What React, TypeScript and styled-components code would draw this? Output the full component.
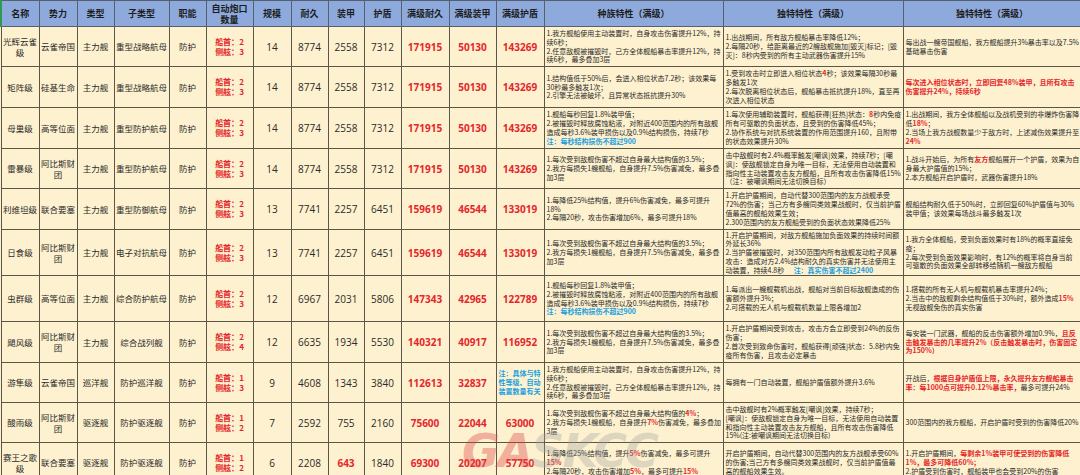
import React from 'react';
import styled, { createGlobalStyle } from 'styled-components';

type Tone = 'red' | 'blue';
type Seg = string | { t: string; tone: Tone };
type Para = Seg[];

const r = (t: string): Seg => ({ t, tone: 'red' });
const note = (t: string): Seg => ({ t, tone: 'blue' });

interface Ship {
  name: string;
  faction: string;
  type: string;
  sub: string;
  bow: number;
  side: number;
  scale: number;
  hp: number;
  armor: number;
  shield: number;
  maxHp: number;
  maxArmor: number;
  maxShield: number | null;
  race: Para[];
  unique: Para[];
  extra: Para[];
  h: number;
  armorRed?: boolean;
}

const COLS = [38, 38, 37, 55, 37, 47, 38, 37, 36, 37, 48, 47, 48, 179, 180, 178];
const HEADERS = [
  '名称', '势力', '类型', '子类型', '职能', '自动炮口数量', '规模', '耐久', '装甲', '护盾',
  '满级耐久', '满级装甲', '满级护盾', '种族特性（满级）', '独特特性（满级）', '独特特性（满级）',
];

const RACE_SKY: Para[] = [
  ['1.我方舰船使用主动装置时，自身攻击伤害提升12%，持续6秒；'],
  ['2.任意敌舰被摧毁时，己方全体舰船暴击率提升12%，持续6秒，最多叠加3层'],
];
const RACE_ABYSS: Para[] = [
  ['1.每次受到敌舰伤害不超过自身最大结构值的3.5%；'],
  ['2.我方每损失1艘舰船，自身提升7.5%伤害减免，最多叠加3层'],
];
const RACE_HIGH: Para[] = [
  ['1.舰船每秒回复1.8%装甲值；'],
  ['2.被摧毁时释放腐蚀粘液，对附近400范围内的所有敌舰造成每秒3.6%装甲损伤以及0.9%结构损伤，持续7秒'],
  [note('注：每秒结构损伤不超过900')],
];

const SHIPS: Ship[] = [
  {
    name: '光辉云雀级', faction: '云雀帝国', type: '主力舰', sub: '重型战略航母', bow: 2, side: 3,
    scale: 14, hp: 8774, armor: 2558, shield: 7312, maxHp: 171915, maxArmor: 50130, maxShield: 143269,
    race: RACE_SKY,
    unique: [
      ['1.出战期间，所有敌方舰船暴击率降低12%；'],
      ['2.每隔20秒，给距离最近的2艘敌舰施加[毁灭]标记；[毁灭]：8秒内受到的所有主动武器伤害提升15%'],
    ],
    extra: [['每出战一艘帝国舰船，我方舰船提升3%暴击率以及7.5%基础暴击伤害']],
    h: 40,
  },
  {
    name: '矩阵级', faction: '硅基生命', type: '主力舰', sub: '重型战略航母', bow: 2, side: 3,
    scale: 14, hp: 8774, armor: 2558, shield: 7312, maxHp: 171915, maxArmor: 50130, maxShield: 143269,
    race: [
      ['1.结构值低于50%后，会进入相位状态7.2秒；该效果每30秒最多触发1次；'],
      ['2.引擎无法被破坏，且异常状态抵抗提升30%'],
    ],
    unique: [
      ['1.受到攻击时立即进入相位状态', r('4'), '秒；该效果每隔30秒最多触发1次'],
      ['2.每次脱离相位状态后，舰船暴击抵抗提升18%，直至再次进入相位状态'],
    ],
    extra: [[r('每次进入相位状态时，立即回复48%装甲，且所有攻击伤害提升24%，持续6秒')]],
    h: 41,
  },
  {
    name: '母巢级', faction: '高等位面', type: '主力舰', sub: '重型防护航母', bow: 2, side: 3,
    scale: 14, hp: 8774, armor: 2558, shield: 7312, maxHp: 171915, maxArmor: 50130, maxShield: 143269,
    race: RACE_HIGH,
    unique: [
      ['1.每次使用辅助装置时，舰船获得[狂热]状态：', r('8'), '秒内免疫所有可驱散的负面状态，且受到的伤害降低45%；'],
      ['2.协作系统与对抗系统装置的作用范围提升160，且附带的状态效果提升30%'],
    ],
    extra: [
      ['1.出战期间，我方全体舰船以及战机受到的非爆炸伤害降低', r('18%'), '；'],
      ['2.当场上我方战舰数量少于敌方时，上述减伤效果提升至', r('24%')],
    ],
    h: 41,
  },
  {
    name: '雷暴级', faction: '阿比斯财团', type: '主力舰', sub: '重型防护航母', bow: 2, side: 3,
    scale: 14, hp: 8774, armor: 2558, shield: 7312, maxHp: 171915, maxArmor: 50130, maxShield: 143269,
    race: RACE_ABYSS,
    unique: [
      ['击中敌舰时有2.4%概率触发[嘲讽]效果，持续7秒；[嘲讽]：使敌舰锁定自身为唯一目标，无法使用自动装置和指向性主动装置攻击友方舰船，且所有攻击伤害降低15%'],
      ['（注：被嘲讽期间无法切换目标）'],
    ],
    extra: [
      ['1.战斗开始后，为所有', r('友方'), '舰船展开一个护盾，效果为自身最大护盾值的15%；'],
      ['2.本方舰船开启护盾时，武器伤害提升18%'],
    ],
    h: 40,
  },
  {
    name: '利维坦级', faction: '联合要塞', type: '主力舰', sub: '重型防御航母', bow: 2, side: 3,
    scale: 13, hp: 7741, armor: 2257, shield: 6451, maxHp: 159619, maxArmor: 46544, maxShield: 133019,
    race: [
      ['1.每降低25%结构值，提升6%伤害减免，最多可提升18%'],
      ['2.每隔20秒，攻击伤害增加6%，最多可提升18%'],
    ],
    unique: [
      ['1.开启护盾期间，自动代替300范围内的友方战舰承受72%的伤害；当己方有多艘同类效果战舰时，仅当前护盾值最高的舰船效果生效；'],
      ['2.300范围内的友方舰船受到的负面状态效果降低25%'],
    ],
    extra: [['舰船结构耐久低于50%时，立即回复60%护盾值与30%装甲值；该效果每场战斗最多触发1次']],
    h: 41,
  },
  {
    name: '日食级', faction: '阿比斯财团', type: '主力舰', sub: '电子对抗航母', bow: 2, side: 3,
    scale: 13, hp: 7741, armor: 2257, shield: 6451, maxHp: 159619, maxArmor: 46544, maxShield: 133019,
    race: RACE_ABYSS,
    unique: [
      ['1.开启护盾期间，对敌方舰船施加负面效果的持续时间额外延长36%'],
      ['2.当护盾被摧毁时，对350范围内所有敌舰发动粒子风暴攻击：造成对方2.4%结构耐久的真实伤害并无法使用主动装置，持续4.8秒\u00a0\u00a0\u00a0\u00a0\u00a0\u00a0', note('注：真实伤害不超过2400')],
    ],
    extra: [
      ['1.我方全体舰船，受到负面效果时有18%的概率直接免疫；'],
      ['2.每次受到负面效果影响时，有12%的概率将自身当前可驱散的负面效果全部转移给随机一艘敌方舰船'],
    ],
    h: 46,
  },
  {
    name: '虫群级', faction: '高等位面', type: '主力舰', sub: '综合防护航母', bow: 2, side: 3,
    scale: 12, hp: 6967, armor: 2031, shield: 5806, maxHp: 147343, maxArmor: 42965, maxShield: 122789,
    race: RACE_HIGH,
    unique: [
      ['1.每派出一艘舰载机出战，舰船对当前目标敌舰造成的伤害额外提升3%；'],
      ['2.可搭载的无人机与舰载机数量上限各增加2'],
    ],
    extra: [
      ['1.搭载的所有无人机与舰载机暴击率提升24%；'],
      ['2.当击中的敌舰剩余结构值低于30%时，额外造成', r('15%'), '无视敌舰免伤的真实伤害'],
    ],
    h: 46,
  },
  {
    name: '飓风级', faction: '阿比斯财团', type: '主力舰', sub: '综合战列舰', bow: 2, side: 4,
    scale: 12, hp: 6635, armor: 1934, shield: 5530, maxHp: 140321, maxArmor: 40917, maxShield: 116952,
    race: RACE_ABYSS,
    unique: [
      ['1.开启护盾期间受到攻击，攻击方会立即受到24%的反伤伤害；'],
      ['2.首次受到致命伤害时，舰船获得[顽强]状态：5.8秒内免疫所有伤害，且攻击必定暴击'],
    ],
    extra: [['每安装一门武器，舰船的反击伤害额外增加0.9%，', r('且反击触发暴击的几率提升2%（反击触发暴击时，伤害固定为150%）')]],
    h: 41,
  },
  {
    name: '游隼级', faction: '云雀帝国', type: '巡洋舰', sub: '防护巡洋舰', bow: 1, side: 3,
    scale: 9, hp: 4608, armor: 1343, shield: 3840, maxHp: 112613, maxArmor: 32837, maxShield: null,
    race: RACE_SKY,
    unique: [['每拥有一门自动装置，舰船护盾值额外提升3.6%']],
    extra: [['开战后，', r('根据自身护盾值上限，永久提升友方舰船暴击率：每1000点可提升0.12%暴击率，'), '最多可提升24%']],
    h: 40,
  },
  {
    name: '酸雨级', faction: '阿比斯财团', type: '驱逐舰', sub: '防护驱逐舰', bow: 1, side: 2,
    scale: 7, hp: 2592, armor: 755, shield: 2160, maxHp: 75600, maxArmor: 22044, maxShield: 63000,
    race: [
      ['1.每次受到敌舰伤害不超过自身最大结构值的', r('4%'), '；'],
      ['2.我方每损失1艘舰船，自身提升', r('7%'), '伤害减免，最多叠加3层'],
    ],
    unique: [
      ['击中敌舰时有2%概率触发[嘲讽]效果，持续7秒；'],
      ['[嘲讽]：使敌舰锁定自身为唯一目标，无法使用自动装置和指向性主动装置攻击友方舰船，且所有攻击伤害降低15%(注:被嘲讽期间无法切换目标)'],
    ],
    extra: [['300范围内的我方舰船，开启护盾时受到的伤害降低20%']],
    h: 40,
  },
  {
    name: '赛王之歌级', faction: '联合要塞', type: '驱逐舰', sub: '防护驱逐舰', bow: 1, side: 2,
    scale: 6, hp: 2208, armor: 643, shield: 1840, maxHp: 69300, maxArmor: 20207, maxShield: 57750,
    armorRed: true,
    race: [
      ['1.每降低25%结构值，提升', r('5%'), '伤害减免，最多可提升', r('15%')],
      ['2.每隔20秒，攻击伤害增加', r('5%'), '，最多可提升', r('15%')],
    ],
    unique: [['开启护盾期间，自动代替300范围内的友方战舰承受60%的伤害;当己方有多艘同类效果战舰时，仅当前护盾值最高的舰船效果生效。']],
    extra: [
      ['1.开启护盾期间，', r('每剩余1%装甲可使受到的伤害降低1%，最多可降低60%；')],
      ['2.护盾受到伤害时，舰船装甲也会受到20%的伤害'],
    ],
    h: 40,
  },
];

function Trait({ paras }: { paras: Para[] }) {
  return (
    <>
      {paras.map((p, i) => (
        <TraitLine key={i}>
          {p.map((s, j) =>
            typeof s === 'string' ? (
              <React.Fragment key={j}>{s}</React.Fragment>
            ) : (
              <Mark key={j} $tone={s.tone}>{s.t}</Mark>
            ),
          )}
        </TraitLine>
      ))}
    </>
  );
}

export default function App() {
  return (
    <>
      <GlobalStyle />
      <Sheet>
        <Table>
          <colgroup>
            {COLS.map((w, i) => (
              <col key={i} style={{ width: w }} />
            ))}
          </colgroup>
          <thead>
            <tr>
              {HEADERS.map((h, i) => (
                <HeadCell key={i} $first={i === 0}>{h}</HeadCell>
              ))}
            </tr>
          </thead>
          <tbody>
            {SHIPS.map((s) => (
              <Row key={s.name} $h={s.h}>
                <TextCell>{s.name}</TextCell>
                <TextCell>{s.faction}</TextCell>
                <TextCell>{s.type}</TextCell>
                <TextCell>{s.sub}</TextCell>
                <TextCell>防护</TextCell>
                <GunCell>
                  <div>船首：{s.bow}</div>
                  <div>侧舷：{s.side}</div>
                </GunCell>
                <NumCell>{s.scale}</NumCell>
                <NumCell>{s.hp}</NumCell>
                <NumCell $red={s.armorRed}>{s.armor}</NumCell>
                <NumCell>{s.shield}</NumCell>
                <NumCell $red>{s.maxHp}</NumCell>
                <NumCell $red>{s.maxArmor}</NumCell>
                {s.maxShield === null ? (
                  <NoteCell>注：具体与特性等级、自动装置数量有关</NoteCell>
                ) : (
                  <NumCell $red>{s.maxShield}</NumCell>
                )}
                <TraitCell><Trait paras={s.race} /></TraitCell>
                <TraitCell><Trait paras={s.unique} /></TraitCell>
                <TraitCell><Trait paras={s.extra} /></TraitCell>
              </Row>
            ))}
          </tbody>
        </Table>
        <Watermark>
          <span>GA</span>SKCC
        </Watermark>
      </Sheet>
    </>
  );
}

const GlobalStyle = createGlobalStyle`
  html, body {
    margin: 0;
    padding: 0;
    background: #fdf1cf;
    overflow: hidden;
  }
  body {
    font-family: "Noto Sans CJK SC", "Noto Sans", sans-serif;
    color: #222;
  }
`;

const Sheet = styled.div`
  position: relative;
  width: 1080px;
  height: 475px;
  overflow: hidden;
  background: #fdf1cf;
`;

const Table = styled.table`
  width: 1080px;
  table-layout: fixed;
  border-collapse: collapse;
  font-family: "Noto Sans CJK SC", "Noto Sans", sans-serif;
`;

const HeadCell = styled.th<{ $first?: boolean }>`
  height: 25px;
  padding: 0 4px;
  background: #8eaadc;
  border: 1px solid #56606f;
  border-left: ${({ $first }) => ($first ? '2px solid #2e9a52' : '1px solid #56606f')};
  font-size: 9px;
  line-height: 11px;
  font-weight: 700;
  color: #1d1d1d;
  text-align: center;
  vertical-align: middle;
`;

const Row = styled.tr<{ $h: number }>`
  height: ${({ $h }) => $h}px;
`;

const Cell = styled.td`
  border: 1px solid #5c5647;
  background: #fdf1cf;
  vertical-align: middle;
  overflow: hidden;
`;

const TextCell = styled(Cell)`
  padding: 0 1px;
  font-size: 8.5px;
  line-height: 11px;
  text-align: center;
  color: #2a2a2a;
`;

const GunCell = styled(Cell)`
  font-size: 8px;
  line-height: 10px;
  font-weight: 700;
  color: #e5262b;
  text-align: center;
`;

const NumCell = styled(Cell)<{ $red?: boolean }>`
  font-size: 10px;
  text-align: center;
  font-family: "Open Sans", "Noto Sans", sans-serif;
  font-weight: ${({ $red }) => ($red ? 700 : 400)};
  color: ${({ $red }) => ($red ? '#e5262b' : '#2a2a2a')};
`;

const NoteCell = styled(Cell)`
  padding: 0 1px 0 2px;
  font-size: 7px;
  line-height: 9px;
  font-weight: 700;
  color: #1a9fe0;
  text-align: left;
`;

const TraitCell = styled(Cell)`
  padding: 0 1px 0 2px;
  font-size: 7px;
  line-height: 8.8px;
  color: #2a2a2a;
  text-align: left;
`;

const TraitLine = styled.div`
  margin: 0;
`;

const Mark = styled.span<{ $tone: Tone }>`
  font-weight: 700;
  color: ${({ $tone }) => ($tone === 'red' ? '#e5262b' : '#1a9fe0')};
`;

const Watermark = styled.div`
  position: absolute;
  left: 462px;
  top: 424px;
  font-family: "DejaVu Sans", sans-serif;
  font-size: 46px;
  font-weight: 900;
  font-style: italic;
  letter-spacing: -2px;
  color: rgba(160, 160, 160, 0.35);
  pointer-events: none;

  span {
    color: rgba(220, 70, 70, 0.4);
  }
`;
